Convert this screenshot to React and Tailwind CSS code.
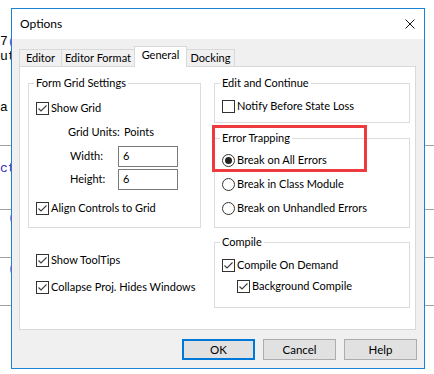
import React from 'react';

// casilla de verificacion estilo Windows
const CheckBox = ({ checked }) => (
  <span className="w-[13px] h-[13px] border border-[#333333] bg-white flex items-center justify-center shrink-0">
    {checked && (
      <svg width="11" height="11" viewBox="0 0 11 11">
        <path d="M1.5 5.5 L4 8 L9.5 2.5" fill="none" stroke="#3c3c3c" strokeWidth="1.1" />
      </svg>
    )}
  </span>
);

const Radio = ({ selected }) => (
  <span className="w-[13px] h-[13px] rounded-full border border-[#333333] bg-white flex items-center justify-center shrink-0">
    {selected && <span className="w-[7px] h-[7px] rounded-full bg-[#222222]" />}
  </span>
);

const CheckRow = ({ checked, label, className = '' }) => (
  <div className={`flex items-center h-[16px] gap-[2px] ${className}`}>
    <CheckBox checked={checked} />
    <span>{label}</span>
  </div>
);

const RadioRow = ({ selected, label, className = '' }) => (
  <div className={`flex items-center h-[16px] gap-[2px] ${className}`}>
    <Radio selected={selected} />
    <span>{label}</span>
  </div>
);

const Group = ({ title, className = '', children }) => (
  <fieldset className={`border border-[#dcdcdc] min-w-0 ${className}`}>
    <legend className="ml-[5px] px-[2px] leading-[16px]">{title}</legend>
    {children}
  </fieldset>
);

const tabs = [
  { name: 'Editor', cls: 'w-[42px] h-[17px] border-l border-t' },
  { name: 'Editor Format', cls: 'w-[73px] h-[17px] border-l border-t' },
  { name: 'General', cls: 'w-[53px] h-[21px] border-l border-t border-r bg-white -mb-px relative z-10 pb-[3px]' },
  { name: 'Docking', cls: 'w-[48px] h-[17px] border-t border-r' },
];

const App = () => {
  return (
    <div className="relative w-[434px] h-[374px] bg-white overflow-hidden">
      {/* ventana de codigo detras del dialogo */}
      <div className="flex flex-col font-['Liberation_Mono',monospace] text-[13px] leading-[15px]">
        <div className="h-[34px]" />
        <div className="h-[15px] whitespace-pre">7<span className="text-[#4a4ad0]">(</span></div>
        <div className="h-[15px] whitespace-pre">ut</div>
        <div className="h-[36px]" />
        <div className="h-[15px]">a</div>
        <div className="h-[30px]" />
        <div className="h-px bg-[#a0a0a0]" />
        <div className="h-[15px]" />
        <div className="h-[15px] text-[#3030c0] whitespace-pre">ct</div>
        <div className="h-[33px]" />
        <div className="h-px bg-[#a0a0a0]" />
        <div className="h-[15px] pl-[8px] text-[#7060d0]">(</div>
        <div className="h-[32px]" />
        <div className="h-px bg-[#a0a0a0]" />
        <div className="h-[15px] pl-[8px] pt-[3px] text-[#7060d0]">(</div>
        <div className="h-[32px]" />
        <div className="h-px bg-[#a0a0a0]" />
      </div>

      {/* dialogo Options */}
      <div className="absolute left-[11px] top-[8px] w-[414px] h-[361px] border border-[#1883d7] bg-[#f0f0f0] flex flex-col font-['Lato',sans-serif] text-[11px] text-black whitespace-nowrap">
        <div className="h-[30px] bg-white flex items-center justify-between pl-[8px] pr-[9px] shrink-0 text-[12px]">
          <span>Options</span>
          <svg width="10" height="10" viewBox="0 0 10 10">
            <path d="M0.5 0.5 L9.5 9.5 M9.5 0.5 L0.5 9.5" stroke="#111111" strokeWidth="1" />
          </svg>
        </div>

        <div className="flex items-end h-[20px] mt-[7px] pl-[7px] shrink-0">
          {tabs.map((t) => (
            <div key={t.name} className={`flex items-center justify-center border-[#d9d9d9] ${t.cls}`}>
              {t.name}
            </div>
          ))}
        </div>

        <div className="ml-[7px] w-[397px] h-[264px] shrink-0 bg-white border border-[#d9d9d9] flex pl-[8px] pr-[5px] pt-[8px] gap-[13px]">
          <div className="w-[173px] flex flex-col">
            <Group title="Form Grid Settings">
              <div className="flex flex-col pl-[7px] pb-[11px]">
                <CheckRow checked label="Show Grid" className="mt-[9px]" />
                <div className="flex items-center h-[16px] mt-[8px] pl-[32px]">
                  <span className="w-[56px]">Grid Units:</span>
                  <span>Points</span>
                </div>
                <div className="flex items-center h-[21px] mt-[6px] pl-[34px]">
                  <span className="w-[48px]">Width:</span>
                  <div className="w-[60px] h-[21px] border border-[#7a7a7a] bg-white pl-[4px] leading-[17px]">6</div>
                </div>
                <div className="flex items-center h-[21px] mt-[2px] pl-[34px]">
                  <span className="w-[48px]">Height:</span>
                  <div className="w-[60px] h-[21px] border border-[#7a7a7a] bg-white pl-[4px] leading-[17px]">6</div>
                </div>
                <CheckRow checked label="Align Controls to Grid" className="mt-[10px]" />
              </div>
            </Group>
            <div className="flex flex-col pl-[8px]">
              <CheckRow checked label="Show ToolTips" className="mt-[24px]" />
              <CheckRow checked label="Collapse Proj. Hides Windows" className="mt-[11px]" />
            </div>
          </div>

          <div className="w-[196px] flex flex-col">
            <Group title="Edit and Continue">
              <div className="flex flex-col pl-[7px] pb-[8px]">
                <CheckRow checked={false} label="Notify Before State Loss" className="mt-[7px]" />
              </div>
            </Group>
            <Group title="Error Trapping" className="mt-[7px]">
              <div className="flex flex-col pl-[7px] pb-[11px]">
                <RadioRow selected label="Break on All Errors" className="mt-[6px]" />
                <RadioRow label="Break in Class Module" className="mt-[8px]" />
                <RadioRow label="Break on Unhandled Errors" className="mt-[8px]" />
              </div>
            </Group>
            <Group title="Compile" className="mt-[6px]">
              <div className="flex flex-col pl-[7px] pb-[13px]">
                <CheckRow checked label="Compile On Demand" className="mt-[7px]" />
                <CheckRow checked label="Background Compile" className="mt-[5px] ml-[15px]" />
              </div>
            </Group>
          </div>
        </div>

        <div className="flex justify-end gap-[8px] pr-[7px] mt-[9px] shrink-0 text-[11.5px]">
          <button className="w-[73px] h-[21px] bg-[#e1e1e1] border-2 border-[#0078d7]">OK</button>
          <button className="w-[73px] h-[21px] bg-[#e1e1e1] border border-[#adadad]">Cancel</button>
          <button className="w-[73px] h-[21px] bg-[#e1e1e1] border border-[#adadad]">Help</button>
        </div>
      </div>

      {/* marco rojo de anotacion */}
      <div className="absolute left-[212px] top-[125px] w-[155px] h-[47px] border-[3px] border-[#ee3b3f]" />
    </div>
  );
};

export default App;
